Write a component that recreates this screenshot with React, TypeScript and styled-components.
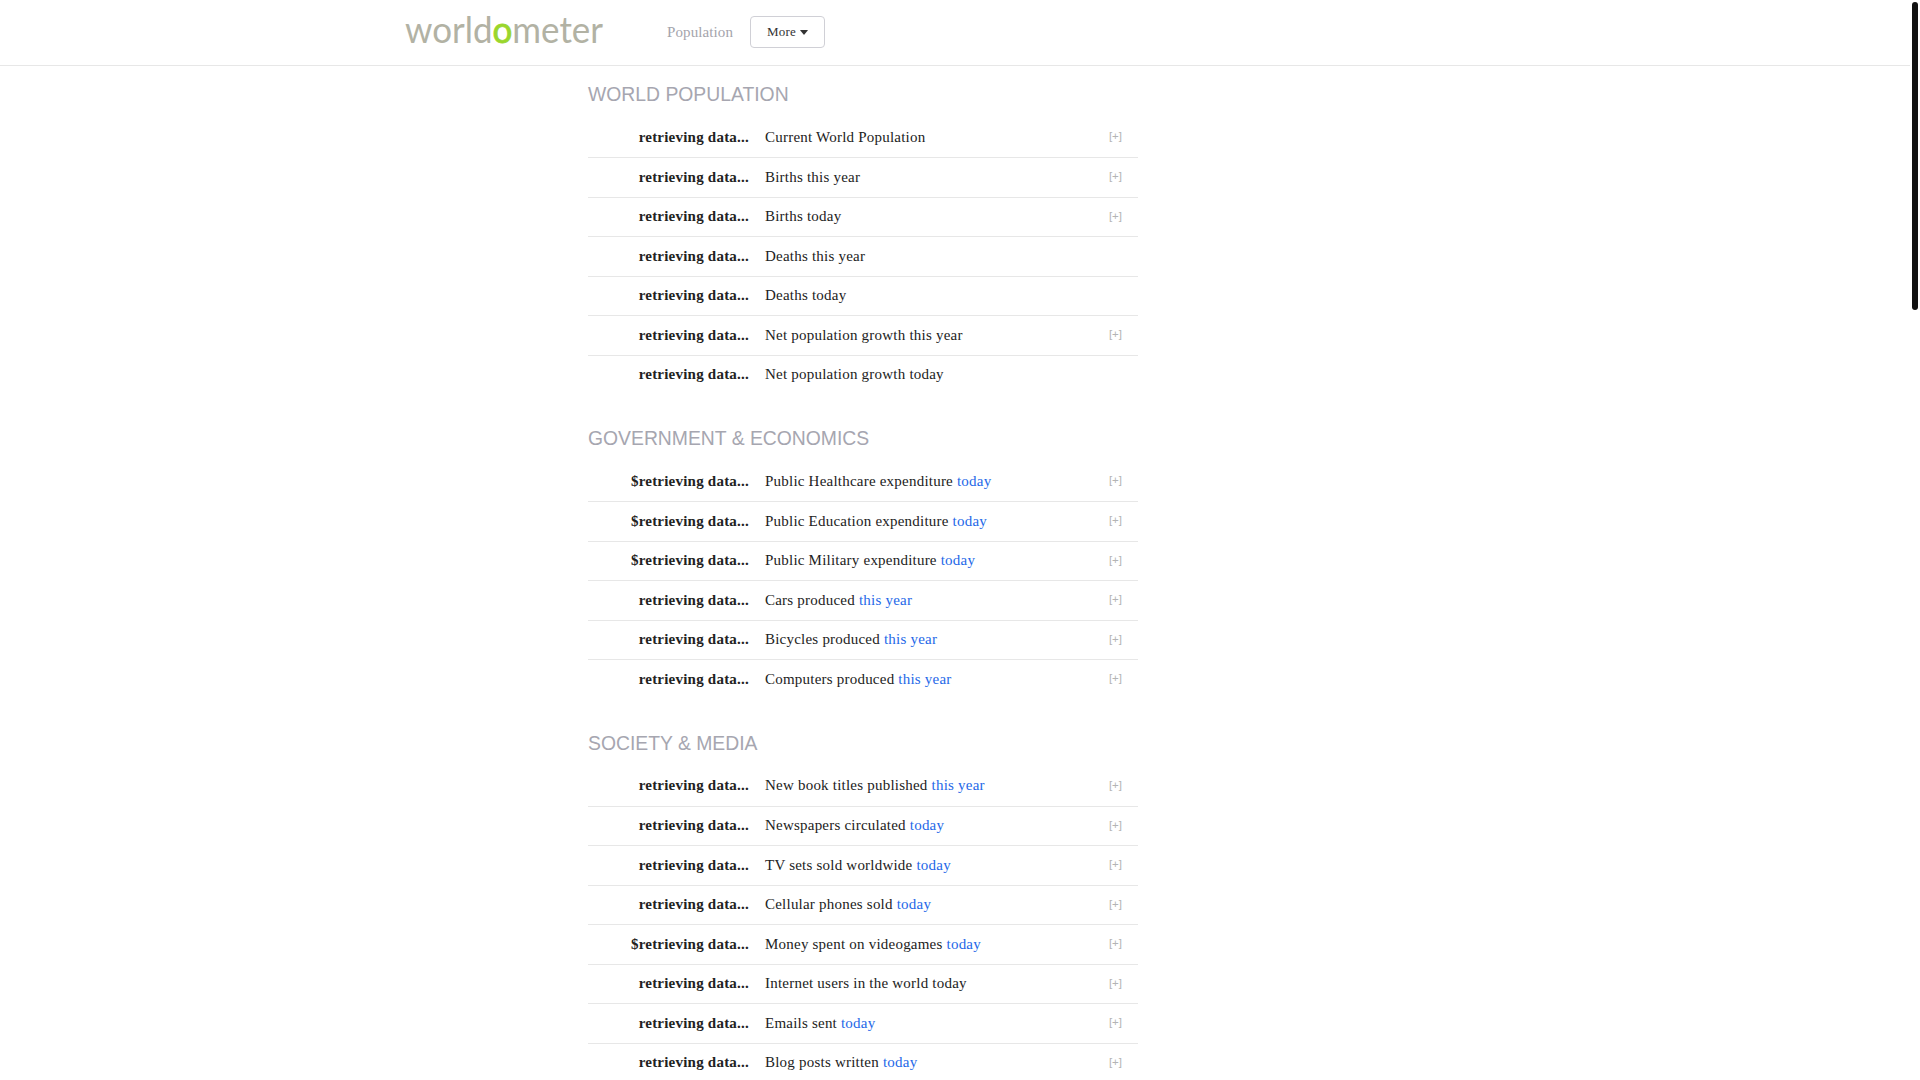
import React from 'react';
import styled, {createGlobalStyle} from 'styled-components';

type Stat = {
    label: string;
    period?: string;
    money?: boolean;
    noMore?: boolean;
};

type Section = {
    title: string;
    rows: Stat[];
};

const sections: Section[] = [
    {
        title: 'WORLD POPULATION',
        rows: [
            {label: 'Current World Population'},
            {label: 'Births this year'},
            {label: 'Births today'},
            {label: 'Deaths this year', noMore: true},
            {label: 'Deaths today', noMore: true},
            {label: 'Net population growth this year'},
            {label: 'Net population growth today', noMore: true},
        ],
    },
    {
        title: 'GOVERNMENT & ECONOMICS',
        rows: [
            {label: 'Public Healthcare expenditure', period: 'today', money: true},
            {label: 'Public Education expenditure', period: 'today', money: true},
            {label: 'Public Military expenditure', period: 'today', money: true},
            {label: 'Cars produced', period: 'this year'},
            {label: 'Bicycles produced', period: 'this year'},
            {label: 'Computers produced', period: 'this year'},
        ],
    },
    {
        title: 'SOCIETY & MEDIA',
        rows: [
            {label: 'New book titles published', period: 'this year'},
            {label: 'Newspapers circulated', period: 'today'},
            {label: 'TV sets sold worldwide', period: 'today'},
            {label: 'Cellular phones sold', period: 'today'},
            {label: 'Money spent on videogames', period: 'today', money: true},
            {label: 'Internet users in the world today'},
            {label: 'Emails sent', period: 'today'},
            {label: 'Blog posts written', period: 'today'},
        ],
    },
];

const GlobalStyle = createGlobalStyle`
    html, body {
        margin: 0;
        height: 100%;
        overflow: hidden;
        background: #fff;
    }
    body {
        font-family: 'Liberation Serif', serif;
        color: #222;
    }
    * {
        box-sizing: border-box;
    }
`;

const Page = styled.div`
    width: 1910px;
    height: 1080px;
    overflow: hidden;
`;

const Header = styled.header`
    display: flex;
    align-items: center;
    height: 66px;
    padding: 0 0 1px 405px;
    border-bottom: 1px solid #e7e7e7;
`;

const Logo = styled.svg`
    display: block;
    width: 206px;
    height: 52px;
    margin-right: 56px;
`;

const NavLink = styled.a`
    font-size: 15px;
    letter-spacing: 0.1px;
    color: #a4a4ac;
    margin-right: 17px;
`;

const MoreButton = styled.button`
    display: flex;
    align-items: center;
    justify-content: center;
    gap: 4px;
    width: 75px;
    height: 32px;
    padding: 0;
    background: #fff;
    border: 1px solid #d0d0d6;
    border-radius: 4px;
    font-family: 'Liberation Serif', serif;
    font-size: 13px;
    letter-spacing: 0.2px;
    color: #333;
`;

const Caret = styled.svg`
    display: block;
    width: 8px;
    height: 5px;
`;

const Main = styled.main`
    width: 550px;
    margin-left: 588px;
`;

const Heading = styled.h2<{$first?: boolean}>`
    margin: 0;
    padding: ${(p) => (p.$first ? '16px' : '32px')} 0 11.5px;
    font-family: 'Liberation Sans', sans-serif;
    font-weight: 400;
    font-size: 19.35px;
    line-height: 24px;
    color: #a6a6b0;
`;

const Row = styled.div`
    display: flex;
    align-items: center;
    height: 39.5px;
    font-size: 15px;
    letter-spacing: 0.22px;
    & + & {
        border-top: 1px solid #e7e7e7;
    }
`;

const Count = styled.strong`
    width: 161px;
    text-align: right;
    color: #222;
`;

const Label = styled.span`
    flex: 1;
    margin-left: 16px;
`;

const Period = styled.a`
    color: #2468e8;
`;

const More = styled.span`
    margin-right: 16px;
    padding-bottom: 2px;
    font-family: 'Liberation Sans', sans-serif;
    font-size: 11.5px;
    letter-spacing: 0;
    color: #b4b4b4;
`;

const ScrollThumb = styled.div`
    position: fixed;
    top: 2px;
    right: 2px;
    width: 6px;
    height: 308px;
    border-radius: 3px;
    background: #111;
`;

const App = () => (
    <Page>
        <GlobalStyle/>
        <Header>
            <Logo viewBox='0 0 206 52'>
                <text
                    x='0'
                    y='37'
                    textLength='198'
                    lengthAdjust='spacingAndGlyphs'
                    fontFamily='Lato, sans-serif'
                    fontWeight='400'
                    fontSize='36'
                    fill='#b2b2a4'
                >
                    {'world'}
                    <tspan
                        fill='#9ad62c'
                        stroke='#9ad62c'
                        strokeWidth='0.8'
                    >
                        {'o'}
                    </tspan>
                    {'meter'}
                </text>
            </Logo>
            <NavLink>{'Population'}</NavLink>
            <MoreButton>
                {'More'}
                <Caret viewBox='0 0 8 5'>
                    <path
                        d='M0.6 0h6.8q.6 0 .3.5L4.4 4.6q-.4.4-.8 0L.3.5Q0 0 .6 0z'
                        fill='#333'
                    />
                </Caret>
            </MoreButton>
        </Header>
        <Main>
            {sections.map((section, i) => (
                <section key={section.title}>
                    <Heading $first={i === 0}>{section.title}</Heading>
                    {section.rows.map((row) => (
                        <Row key={row.label}>
                            <Count>{row.money ? '$retrieving data...' : 'retrieving data...'}</Count>
                            <Label>
                                {row.label}
                                {row.period && ' '}
                                {row.period && <Period>{row.period}</Period>}
                            </Label>
                            {!row.noMore && <More>{'[+]'}</More>}
                        </Row>
                    ))}
                </section>
            ))}
        </Main>
        <ScrollThumb/>
    </Page>
);

export default App;
